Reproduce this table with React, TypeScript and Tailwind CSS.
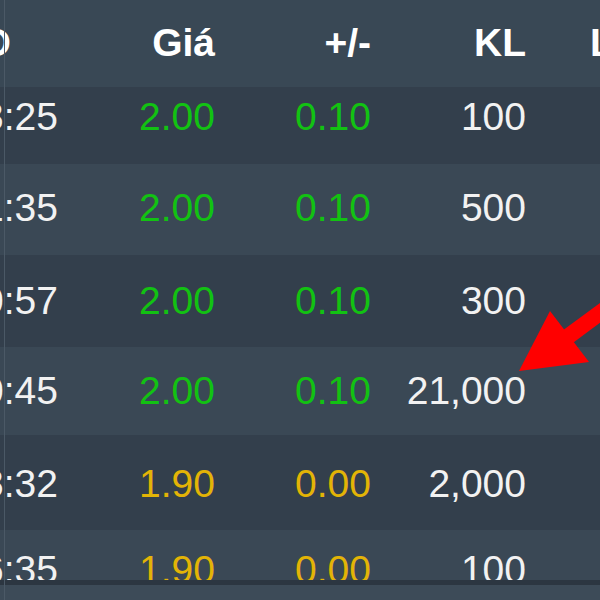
const rows = [
  { time: "10:13:25", price: "2.00", change: "0.10", vol: "100", up: true, cls: "h-[77px] pb-[17px] bg-[#333f4c]" },
  { time: "10:11:35", price: "2.00", change: "0.10", vol: "500", up: true, cls: "h-[91px] pb-[3px] bg-[#3a4855]" },
  { time: "10:10:57", price: "2.00", change: "0.10", vol: "300", up: true, cls: "h-[92px] bg-[#333f4c]" },
  { time: "10:10:45", price: "2.00", change: "0.10", vol: "21,000", up: true, cls: "h-[88px] bg-[#3a4855]" },
  { time: "10:08:32", price: "1.90", change: "0.00", vol: "2,000", up: false, cls: "h-[95px] pt-[3px] bg-[#333f4c]" },
  { time: "10:06:35", price: "1.90", change: "0.00", vol: "100", up: false, cls: "h-[92px] pb-[12px] bg-[#3a4855]" },
];

export default function App() {
  return (
    <div className="relative w-[600px] h-[600px] overflow-hidden bg-[#333f4c] font-['Liberation_Sans',Arial,sans-serif] text-[39px] leading-[44px] flex flex-col">
      {/* header */}
      <div className="h-[87px] shrink-0 flex items-center pb-[1px] bg-[#394855] font-bold text-white whitespace-nowrap">
        <div className="w-[11px] shrink-0 flex justify-end">
          <span className="shrink-0">Giờ GD</span>
        </div>
        <div className="w-[204px] shrink-0 text-right">Giá</div>
        <div className="w-[156px] shrink-0 text-right">+/-</div>
        <div className="w-[155px] shrink-0 text-right">KL</div>
        <div className="pl-[64px] shrink-0">Loại</div>
      </div>

      {/* rows */}
      <div className="flex-1 overflow-hidden flex flex-col">
        {rows.map((r, i) => {
          const tone = r.up ? "text-[#12c212]" : "text-[#e3b406]";
          return (
            <div key={i} className={`shrink-0 flex items-center whitespace-nowrap ${r.cls}`}>
              <div className="w-[58px] shrink-0 flex justify-end text-[#f2f2f2]">
                <span className="shrink-0">{r.time}</span>
              </div>
              <div className={`w-[157px] shrink-0 text-right ${tone}`}>{r.price}</div>
              <div className={`w-[156px] shrink-0 text-right ${tone}`}>{r.change}</div>
              <div className="w-[155px] shrink-0 text-right text-[#f2f2f2]">{r.vol}</div>
            </div>
          );
        })}
      </div>

      {/* horizontal scrollbar strip */}
      <div className="h-[20px] shrink-0 border-t-[5px] border-[#2c3641] bg-[#3d4b58]" />

      {/* table left edge line */}
      <div className="absolute left-[4px] top-0 h-full w-px bg-[#4b5966]" />

      <svg className="absolute left-0 top-0" width="600" height="600" viewBox="0 0 600 600">
        <line x1="566" y1="338" x2="612" y2="304" stroke="#ff0000" strokeWidth="16" />
        <polygon points="519,371 550,311 589,362" fill="#ff0000" />
      </svg>
    </div>
  );
}
